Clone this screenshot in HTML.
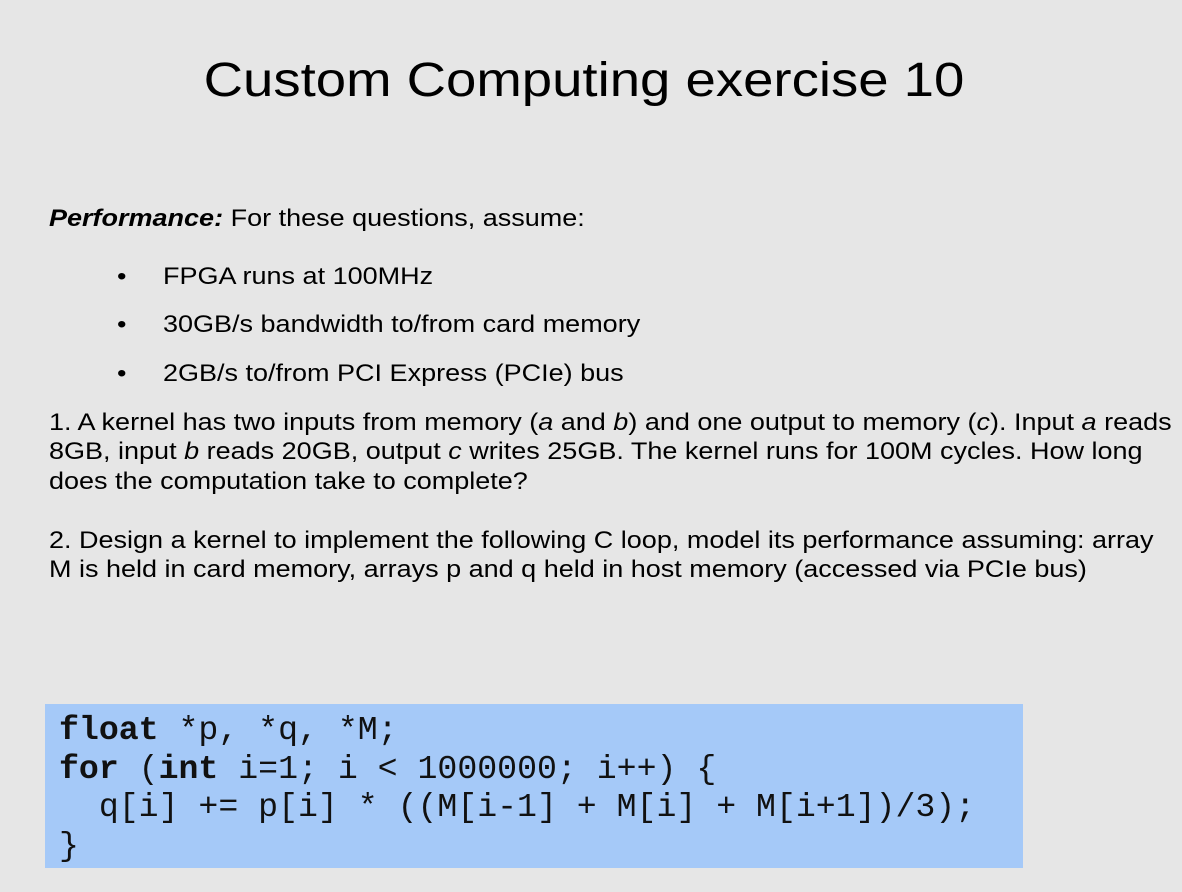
<!DOCTYPE html>
<html><head><meta charset="utf-8"><style>
body{margin:0;width:1182px;height:892px;background:#e6e6e6;position:relative;overflow:hidden;font-family:"Liberation Sans",Arial,sans-serif;color:#000}
.t{position:absolute;font-size:24px;line-height:29.5px;white-space:nowrap;transform:scaleX(1.125);transform-origin:0 0}
h1{position:absolute;top:51px;left:0;width:1168px;text-align:center;margin:0;font-weight:normal;font-size:48px;line-height:60px;transform:scaleX(1.136);transform-origin:584px 0}
.code{position:absolute;left:45px;top:704px;width:978px;height:164px;background:#a5c9f8}
.code pre{margin:0;position:absolute;left:14px;top:7px;font-family:"Liberation Mono","Courier New",monospace;font-size:33.2px;line-height:38.7px;color:#111}
</style></head><body>
<h1>Custom Computing exercise 10</h1>
<div class="t" style="left:49px;top:204px"><b><i>Performance:</i></b> For these questions, assume:</div>
<div class="t" style="left:117px;top:262px">•</div><div class="t" style="left:163px;top:262px">FPGA runs at 100MHz</div>
<div class="t" style="left:117px;top:310px">•</div><div class="t" style="left:163px;top:310px">30GB/s bandwidth to/from card memory</div>
<div class="t" style="left:117px;top:359px">•</div><div class="t" style="left:163px;top:359px">2GB/s to/from PCI Express (PCIe) bus</div>
<div class="t" style="left:49px;top:408px">1. A kernel has two inputs from memory (<i>a</i> and <i>b</i>) and one output to memory (<i>c</i>). Input <i>a</i> reads</div>
<div class="t" style="left:49px;top:437px">8GB, input <i>b</i> reads 20GB, output <i>c</i> writes 25GB. The kernel runs for 100M cycles. How long</div>
<div class="t" style="left:49px;top:467px">does the computation take to complete?</div>
<div class="t" style="left:49px;top:526px">2. Design a kernel to implement the following C loop, model its performance assuming: array</div>
<div class="t" style="left:49px;top:555px">M is held in card memory, arrays p and q held in host memory (accessed via PCIe bus)</div>
<div class="code"><pre><b>float</b> *p, *q, *M;
<b>for</b> (<b>int</b> i=1; i &lt; 1000000; i++) {
  q[i] += p[i] * ((M[i-1] + M[i] + M[i+1])/3);
}</pre></div>
</body></html>
